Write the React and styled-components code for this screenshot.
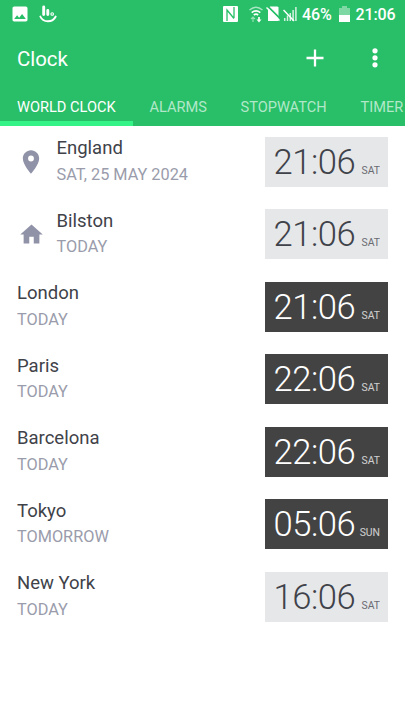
import styled, { createGlobalStyle } from "styled-components";

const colors = {
  header: "#28bf68",
  indicator: "#35f487",
  white: "#ffffff",
  text: "#404249",
  muted: "#9a9cab",
  icon: "#9092a8",
  day: "#e6e7e9",
  night: "#434343",
};

const GlobalStyle = createGlobalStyle`
  * {
    box-sizing: border-box;
  }

  body {
    margin: 0;
    background: #fff;
    font-family: Roboto, sans-serif;
    overflow: hidden;
  }
`;

const Screen = styled.div`
  width: 405px;
  height: 720px;
  overflow: hidden;
  background: ${colors.white};
`;

const Header = styled.header`
  height: 125.5px;
  background: ${colors.header};
  color: ${colors.white};
`;

const StatusBar = styled.div`
  height: 28px;
  display: flex;
  align-items: center;
  justify-content: space-between;
  padding: 0 9px 0 10px;
`;

const StatusGroup = styled.div`
  display: flex;
  align-items: center;
`;

const StatusIcon = styled.svg`
  display: block;
  flex: none;
  margin-right: ${(props) => props.$gap || 0}px;
`;

const StatusText = styled.span`
  font-size: 16px;
  font-weight: 500;
  line-height: 20px;
  padding-top: 1px;
  white-space: nowrap;
  width: ${(props) => props.$width}px;
  margin-right: ${(props) => props.$gap || 0}px;
  letter-spacing: -0.1px;
`;

const Toolbar = styled.div`
  height: 60px;
  display: flex;
  align-items: center;
  padding: 0 18px 0 17px;
`;

const Title = styled.h1`
  flex: 1;
  margin: 0;
  font-size: 20.4px;
  font-weight: 400;
  line-height: 24px;
  padding-top: 1px;
`;

const IconButton = styled.button`
  display: flex;
  align-items: center;
  justify-content: center;
  width: 24px;
  height: 24px;
  padding: 0;
  border: none;
  background: none;
  color: inherit;
  margin-left: ${(props) => props.$gap || 0}px;
`;

const Tabs = styled.nav`
  height: 37.5px;
  display: flex;
  overflow: hidden;
`;

const Tab = styled.div`
  flex: none;
  padding: 10px 17px 0;
  width: ${(props) => props.$width}px;
  height: 37.5px;
  font-size: 14.6px;
  line-height: 18px;
  white-space: nowrap;
  color: ${(props) => (props.$active ? colors.white : "#b2e8c9")};
  border-bottom: 5px solid
    ${(props) => (props.$active ? colors.indicator : "transparent")};
`;

const CityRow = styled.div`
  height: 72.5px;
  display: flex;
  align-items: flex-start;
  padding: 11.25px 17px 0;
`;

const RowIcon = styled.div`
  width: 28px;
  height: 50px;
  display: flex;
  align-items: center;
  justify-content: center;
  margin-right: 11.5px;
`;

const CityInfo = styled.div`
  flex: 1;
  padding-top: 0.4px;
`;

const CityName = styled.div`
  font-size: 18.5px;
  line-height: 22px;
  color: ${colors.text};
`;

const CityDate = styled.div`
  margin-top: 4.5px;
  font-size: 16.3px;
  line-height: 22px;
  color: ${colors.muted};
`;

const TimeTile = styled.div`
  width: 123px;
  height: 50px;
  display: flex;
  align-items: baseline;
  justify-content: space-between;
  padding: 0 8px 0 8.5px;
  line-height: 50px;
  background: ${(props) => (props.$night ? colors.night : colors.day)};
  color: ${(props) => (props.$night ? colors.white : colors.text)};
`;

const Time = styled.span`
  font-size: 34.6px;
  font-weight: 300;
  letter-spacing: -0.45px;
`;

const Day = styled.span`
  font-size: 10.4px;
  font-weight: 400;
  line-height: 12px;
  padding-bottom: 1px;
  margin-bottom: 1px;
  opacity: 0.75;
`;

const tabs = [
  { label: "WORLD CLOCK", width: 132.5, active: true },
  { label: "ALARMS", width: 91 },
  { label: "STOPWATCH", width: 120 },
  { label: "TIMER", width: 80 },
];

const cities = [
  { name: "England", date: "SAT, 25 MAY 2024", time: "21:06", day: "SAT", icon: "pin" },
  { name: "Bilston", date: "TODAY", time: "21:06", day: "SAT", icon: "home" },
  { name: "London", date: "TODAY", time: "21:06", day: "SAT", night: true },
  { name: "Paris", date: "TODAY", time: "22:06", day: "SAT", night: true },
  { name: "Barcelona", date: "TODAY", time: "22:06", day: "SAT", night: true },
  { name: "Tokyo", date: "TOMORROW", time: "05:06", day: "SUN", night: true },
  { name: "New York", date: "TODAY", time: "16:06", day: "SAT" },
];

const icons = {
  pin: {
    size: 28,
    path: "M12 2C8.13 2 5 5.13 5 9c0 5.25 7 13 7 13s7-7.75 7-13c0-3.87-3.13-7-7-7zm0 9.5a2.5 2.5 0 0 1 0-5 2.5 2.5 0 0 1 0 5z",
  },
  home: {
    size: 27,
    path: "M10 20v-6h4v6h5v-8h3L12 3 2 12h3v8z",
  },
};

function StatusIcons() {
  return (
    <StatusGroup>
      <StatusIcon width="20" height="20" viewBox="0 0 24 24" fill="#fff" $gap={9}>
        <path d="M21 19V5c0-1.1-.9-2-2-2H5c-1.1 0-2 .9-2 2v14c0 1.1.9 2 2 2h14c1.1 0 2-.9 2-2zM8.500 13.500l2.500 3L14.500 12l4.500 6H5l3.500-4.500z" />
      </StatusIcon>
      <StatusIcon width="18" height="18" viewBox="0 0 18 18" fill="none" stroke="#fff">
        <path d="M4.700 2v7.500M8.800 5.500v4" strokeWidth="2.900" strokeLinecap="round" />
        <circle cx="13.200" cy="9" r="1.300" strokeWidth="1.100" />
        <path d="M1.300 11.500c2.700 6.300 12.500 6.300 15.400 0" strokeWidth="1.900" strokeLinecap="round" />
      </StatusIcon>
    </StatusGroup>
  );
}

function SystemIcons() {
  return (
    <StatusGroup>
      <StatusIcon width="15" height="16" viewBox="0 0 15 16" $gap={11}>
        <rect width="15" height="16" rx="1" fill="#fff" />
        <path
          d="M4 15V4l7 8.500M11 1v11M4 4l7 8.500"
          fill="none"
          stroke={colors.header}
          strokeWidth="1.300"
        />
      </StatusIcon>
      <StatusIcon width="14" height="17" viewBox="0 0 14 17" fill="none" stroke="#fff" $gap={3}>
        <path d="M.5 4c4-3.300 9-3.300 13 0" strokeWidth="1.400" opacity=".6" />
        <path d="M2.700 6.600c2.600-2 6-2 8.600 0M4.800 9c1.400-1 3-1 4.400 0" strokeWidth="1.700" />
        <path d="M4 16v-5M2 13l2-2 2 2" strokeWidth="1.200" opacity=".5" />
        <path d="M10 11v3" strokeWidth="1.700" />
        <path d="M7.500 13.500h5L10 16.500z" fill="#fff" stroke="none" />
      </StatusIcon>
      <StatusIcon width="14" height="16" viewBox="0 0 14 16" $gap={3}>
        <path d="M4 .5h7.500l1 1V15H2V3z" fill="#fff" />
        <path d="M1.500 0l14 14" stroke={colors.header} strokeWidth="1.800" />
        <path d="M.5 1.500l13 13" stroke="#fff" strokeWidth="1.400" />
      </StatusIcon>
      <StatusIcon width="14" height="16" viewBox="0 0 14 16" stroke="#fff" $gap={5}>
        <path d="M1.700 15v-3M4.500 15V9.500M7.300 15V7" strokeWidth="1.500" opacity=".8" />
        <path d="M10.100 15V4M12.900 15V1" strokeWidth="1.500" opacity=".8" />
        <path d="M.5 4l10.500 11" strokeWidth="1.500" />
      </StatusIcon>
      <StatusText $width={30} $gap={7}>46%</StatusText>
      <StatusIcon width="11" height="16" viewBox="0 0 11 16" $gap={5.5}>
        <path d="M3 0h5v2h3v14H0V2h3z" fill="#fff" opacity=".4" />
        <path d="M0 9h11v7H0z" fill="#fff" />
      </StatusIcon>
      <StatusText $width={40.5}>21:06</StatusText>
    </StatusGroup>
  );
}

export default function App() {
  return (
    <>
      <GlobalStyle />
      <Screen>
        <Header>
          <StatusBar>
            <StatusIcons />
            <SystemIcons />
          </StatusBar>
          <Toolbar>
            <Title>Clock</Title>
            <IconButton aria-label="Add city">
              <svg width="24" height="24" viewBox="0 0 24 24">
                <path d="M12 3.500v17M3.500 12h17" stroke="#fff" strokeWidth="2.300" />
              </svg>
            </IconButton>
            <IconButton aria-label="More options" $gap={36}>
              <svg width="24" height="24" viewBox="0 0 24 24" fill="#fff">
                <circle cx="12" cy="4.800" r="2.600" />
                <circle cx="12" cy="11.800" r="2.600" />
                <circle cx="12" cy="18.800" r="2.600" />
              </svg>
            </IconButton>
          </Toolbar>
          <Tabs>
            {tabs.map((tab) => (
              <Tab key={tab.label} $width={tab.width} $active={tab.active}>
                {tab.label}
              </Tab>
            ))}
          </Tabs>
        </Header>
        {cities.map((city) => (
          <CityRow key={city.name}>
            {city.icon && (
              <RowIcon>
                <svg
                  width={icons[city.icon].size}
                  height={icons[city.icon].size}
                  viewBox="0 0 24 24"
                  fill={colors.icon}
                >
                  <path d={icons[city.icon].path} />
                </svg>
              </RowIcon>
            )}
            <CityInfo>
              <CityName>{city.name}</CityName>
              <CityDate>{city.date}</CityDate>
            </CityInfo>
            <TimeTile $night={city.night}>
              <Time>{city.time}</Time>
              <Day>{city.day}</Day>
            </TimeTile>
          </CityRow>
        ))}
      </Screen>
    </>
  );
}
